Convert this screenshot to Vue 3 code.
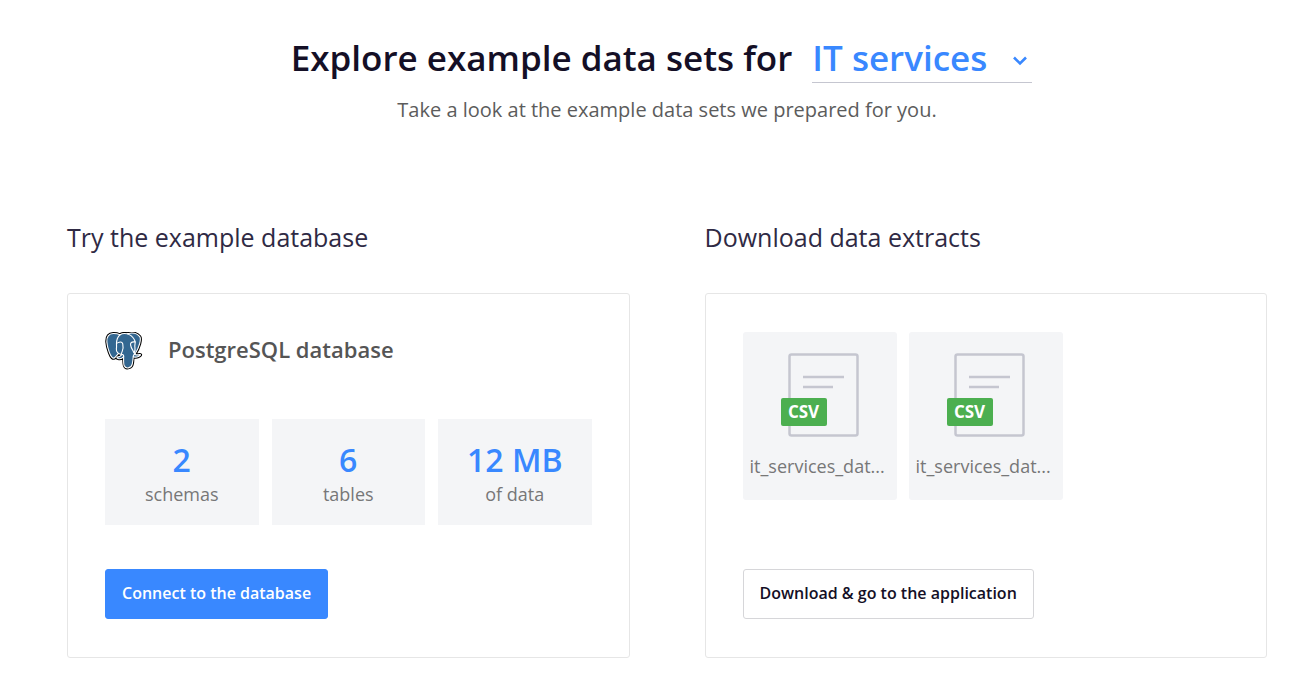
<script setup>
import { ref } from 'vue'

const industry = ref('IT services')
const industries = ['IT services', 'Retail', 'Finance', 'Manufacturing']

const stats = [
  { value: '2', label: 'schemas' },
  { value: '6', label: 'tables' },
  { value: '12 MB', label: 'of data' },
]

const files = [
  { id: 1, name: 'it_services_dat...' },
  { id: 2, name: 'it_services_dat...' },
]
</script>

<template>
  <main class="page">
    <header class="intro">
      <div class="headline">
        <h1><label for="industry">Explore example data sets for</label></h1>
        <div class="picker">
          <select id="industry" v-model="industry">
            <option v-for="name in industries" :key="name">{{ name }}</option>
          </select>
          <svg class="chevron" viewBox="0 0 16 10" aria-hidden="true">
            <path d="M2 1.5 8 7.5 14 1.5" fill="none" stroke="currentColor" stroke-width="2.6" />
          </svg>
        </div>
      </div>
      <p class="lead">Take a look at the example data sets we prepared for you.</p>
    </header>

    <div class="columns">
      <section class="column">
        <h2>Try the example database</h2>
        <div class="card">
          <div class="database">
            <svg class="elephant" viewBox="4 6 432 445" aria-hidden="true">
              <path class="outline" d="M323.205,324.227c2.833-23.601,1.984-27.062,19.563-23.239l4.463,0.392c13.517,0.615,31.199-2.174,41.587-7c22.362-10.376,35.622-27.7,13.572-23.148c-50.297,10.376-53.755-6.655-53.755-6.655c53.111-78.803,75.313-178.836,56.149-203.322C352.514-5.534,262.036,26.049,260.522,26.869l-0.482,0.089c-9.938-2.062-21.06-3.294-33.554-3.496c-22.761-0.374-40.032,5.967-53.133,15.904c0,0-161.408-66.498-153.899,83.628c1.597,31.936,45.777,241.655,98.47,178.31c19.259-23.163,37.871-42.748,37.871-42.748c9.242,6.14,20.307,9.272,31.912,8.147l0.897-0.765c-0.281,2.876-0.157,5.689,0.359,9.019c-13.572,15.167-9.584,17.83-36.723,23.416c-27.457,5.659-11.326,15.734-0.797,18.367c12.768,3.193,42.305,7.716,62.268-20.224l-0.795,3.188c5.325,4.26,4.965,30.619,5.72,49.452c0.756,18.834,2.017,36.409,5.856,46.771c3.839,10.36,8.369,37.05,44.036,29.406c29.809-6.388,52.6-15.582,54.677-101.107" />
              <path class="body" d="M402.395,271.23c-50.302,10.376-53.76-6.655-53.76-6.655c53.111-78.808,75.313-178.843,56.153-203.326c-52.27-66.785-142.752-35.2-144.262-34.38l-0.486,0.087c-9.938-2.063-21.06-3.292-33.56-3.496c-22.761-0.373-40.026,5.967-53.127,15.902c0,0-161.411-66.495-153.904,83.63c1.597,31.938,45.776,241.657,98.471,178.312c19.26-23.163,37.869-42.748,37.869-42.748c9.243,6.14,20.308,9.272,31.908,8.147l0.901-0.765c-0.28,2.876-0.152,5.689,0.361,9.019c-13.575,15.167-9.586,17.83-36.723,23.416c-27.459,5.659-11.328,15.734-0.796,18.367c12.768,3.193,42.307,7.716,62.266-20.224l-0.796,3.188c5.319,4.26,9.054,27.711,8.428,48.969c-0.626,21.259-1.044,35.854,3.147,47.254c4.191,11.4,8.368,37.05,44.042,29.406c29.809-6.388,45.256-22.942,47.405-50.555c1.525-19.631,4.976-16.729,5.194-34.28l2.768-8.309c3.192-26.611,0.507-35.196,18.872-31.203l4.463,0.392c13.517,0.615,31.208-2.174,41.591-7c22.358-10.376,35.618-27.7,13.573-23.148z" />
              <g class="lines">
                <path d="M215.866,286.484c-1.385,49.516,0.348,99.377,5.193,111.495c4.848,12.118,15.223,35.688,50.9,28.045c29.806-6.39,40.651-18.756,45.357-46.051c3.466-20.082,10.148-75.854,11.005-87.281" />
                <path d="M173.104,38.256c0,0-161.521-66.016-154.012,84.109c1.597,31.938,45.779,241.664,98.473,178.316c19.256-23.166,36.671-41.335,36.671-41.335" />
                <path d="M260.349,26.207c-5.591,1.753,89.848-34.889,144.087,34.417c19.159,24.484-3.043,124.519-56.153,203.329" />
                <path d="M348.282,263.953c0,0,3.461,17.036,53.764,6.653c22.04-4.552,8.776,12.774-13.577,23.155c-18.345,8.514-59.474,10.696-60.146-1.069c-1.729-30.355,21.647-21.133,19.96-28.739c-1.525-6.85-11.979-13.573-18.894-30.338c-6.037-14.633-82.796-126.849,21.287-110.183c3.813-0.789-27.146-99.002-124.553-100.599c-97.385-1.597-94.19,119.762-94.19,119.762" />
                <path d="M188.604,274.334c-13.577,15.166-9.584,17.829-36.723,23.417c-27.459,5.66-11.326,15.733-0.797,18.365c12.768,3.195,42.307,7.718,62.266-20.229c6.078-8.509-0.036-22.086-8.385-25.547c-4.034-1.671-9.428-3.765-16.361,3.994z" />
                <path d="M187.715,274.069c-1.368-8.917,2.93-19.528,7.536-31.942c6.922-18.626,22.893-37.255,10.117-96.339c-9.523-44.029-73.396-9.163-73.436-3.193c-0.039,5.968,2.889,30.26-1.067,58.548c-5.162,36.913,23.488,68.132,56.479,64.938" />
                <path d="M350.676,123.432c0.863,15.994-3.445,26.888-3.988,43.914c-0.804,24.748,11.799,53.074-7.191,81.435" />
              </g>
            </svg>
            <h3>PostgreSQL database</h3>
          </div>

          <dl class="stats">
            <div v-for="stat in stats" :key="stat.label" class="stat">
              <dt>{{ stat.label }}</dt>
              <dd>{{ stat.value }}</dd>
            </div>
          </dl>

          <button type="button" class="button primary">Connect to the database</button>
        </div>
      </section>

      <section class="column">
        <h2>Download data extracts</h2>
        <div class="card">
          <ul class="files">
            <li v-for="file in files" :key="file.id" class="file">
              <div class="sheet">
                <svg viewBox="0 0 78 84" aria-hidden="true">
                  <rect x="8.5" y="1.5" width="68" height="81" rx="2" />
                  <path d="M22 24H63M22 34H52" />
                </svg>
                <span class="badge">CSV</span>
              </div>
              <span class="name">{{ file.name }}</span>
            </li>
          </ul>

          <button type="button" class="button">Download &amp; go to the application</button>
        </div>
      </section>
    </div>
  </main>
</template>

<style>
body {
  background: #fff;
}
</style>

<style scoped>
.page {
  box-sizing: border-box;
  padding: 34px 33px 29px 67px;
  font-family: "Open Sans", "Noto Sans", sans-serif;
  color: #140f26;
}

h1,
h2,
h3,
p,
dl,
dd,
ul {
  margin: 0;
  padding: 0;
}

h1,
h3,
.picker select,
.stat dd {
  font-weight: 600;
}

.intro {
  text-align: center;
}

.headline {
  display: flex;
  justify-content: center;
  gap: 20px;
  padding-right: 11px;
}

h1 {
  font-size: 35px;
  line-height: 48px;
}

.picker {
  display: grid;
  align-items: center;
  width: 220px;
  border-bottom: 1px solid #c5c6d0;
  color: #3988ff;
}

.picker select,
.chevron {
  grid-area: 1 / 1;
}

.picker select {
  appearance: none;
  width: 100%;
  height: 48px;
  padding: 0;
  border: 0;
  background: transparent;
  color: inherit;
  font-family: inherit;
  font-size: 35px;
  line-height: 48px;
}

.chevron {
  justify-self: end;
  width: 16px;
  height: 10px;
  margin: 5px 4px 0 0;
  pointer-events: none;
}

.lead {
  margin-top: 12px;
  color: #5c5c5c;
  font-size: 20px;
  line-height: 30px;
}

.columns {
  display: grid;
  grid-template-columns: 1fr 1fr;
  gap: 75px;
  margin-top: 96px;
}

.column {
  display: flex;
  flex-direction: column;
  min-width: 0;
}

h2 {
  font-size: 25px;
  line-height: 32px;
  font-weight: 400;
  color: #2f2a44;
}

.card {
  display: flex;
  flex: 1;
  flex-direction: column;
  align-items: flex-start;
  justify-content: space-between;
  margin-top: 40px;
  padding: 38px 37px;
  border: 1px solid #e6e6e6;
  border-radius: 3px;
}

.database {
  display: flex;
  align-items: flex-start;
  gap: 25px;
}

.elephant {
  width: 38px;
  height: 38px;
}

.outline {
  fill: #000;
  stroke: #000;
  stroke-width: 37;
}

.body {
  fill: #336791;
}

.lines {
  fill: none;
  stroke: #fff;
  stroke-width: 13;
  stroke-linecap: round;
  stroke-linejoin: round;
}

h3 {
  font-size: 22px;
  line-height: 34px;
  color: #555;
}

.stats {
  display: grid;
  grid-template-columns: repeat(3, 1fr);
  gap: 13px;
  width: 100%;
  margin: 49px 0 44px;
}

.stat {
  display: flex;
  flex-direction: column-reverse;
  padding: 19px 8px;
  background: #f4f5f7;
  text-align: center;
}

.stat dd {
  color: #3988ff;
  font-size: 32px;
  line-height: 44px;
}

.stat dt {
  color: #777;
  font-size: 18px;
  line-height: 24px;
}

.button {
  height: 50px;
  padding: 0 16px 2px;
  border: 1px solid #d6d6d9;
  border-radius: 3px;
  background: #fff;
  color: #140f26;
  font: 600 16px/24px "Open Sans", "Noto Sans", sans-serif;
}

.primary {
  border-color: #3988ff;
  background: #3988ff;
  color: #fff;
}

.files {
  display: flex;
  gap: 12px;
  list-style: none;
}

.file {
  box-sizing: border-box;
  display: flex;
  flex-direction: column;
  align-items: center;
  width: 154px;
  height: 168px;
  padding: 21px 7px;
  border-radius: 3px;
  background: #f4f5f7;
}

.sheet {
  position: relative;
  width: 78px;
  height: 84px;
}

.sheet svg {
  display: block;
  width: 100%;
  height: 100%;
  fill: none;
  stroke: #c5c6d0;
  stroke-width: 2.5;
}

.badge {
  position: absolute;
  left: 0;
  bottom: 11px;
  width: 46px;
  border-radius: 2px;
  background: #4caf50;
  color: #fff;
  font-size: 17px;
  line-height: 28px;
  font-weight: 700;
  text-align: center;
}

.name {
  width: 100%;
  margin-top: 17px;
  color: #777;
  font-size: 18px;
  line-height: 24px;
  white-space: nowrap;
}
</style>
